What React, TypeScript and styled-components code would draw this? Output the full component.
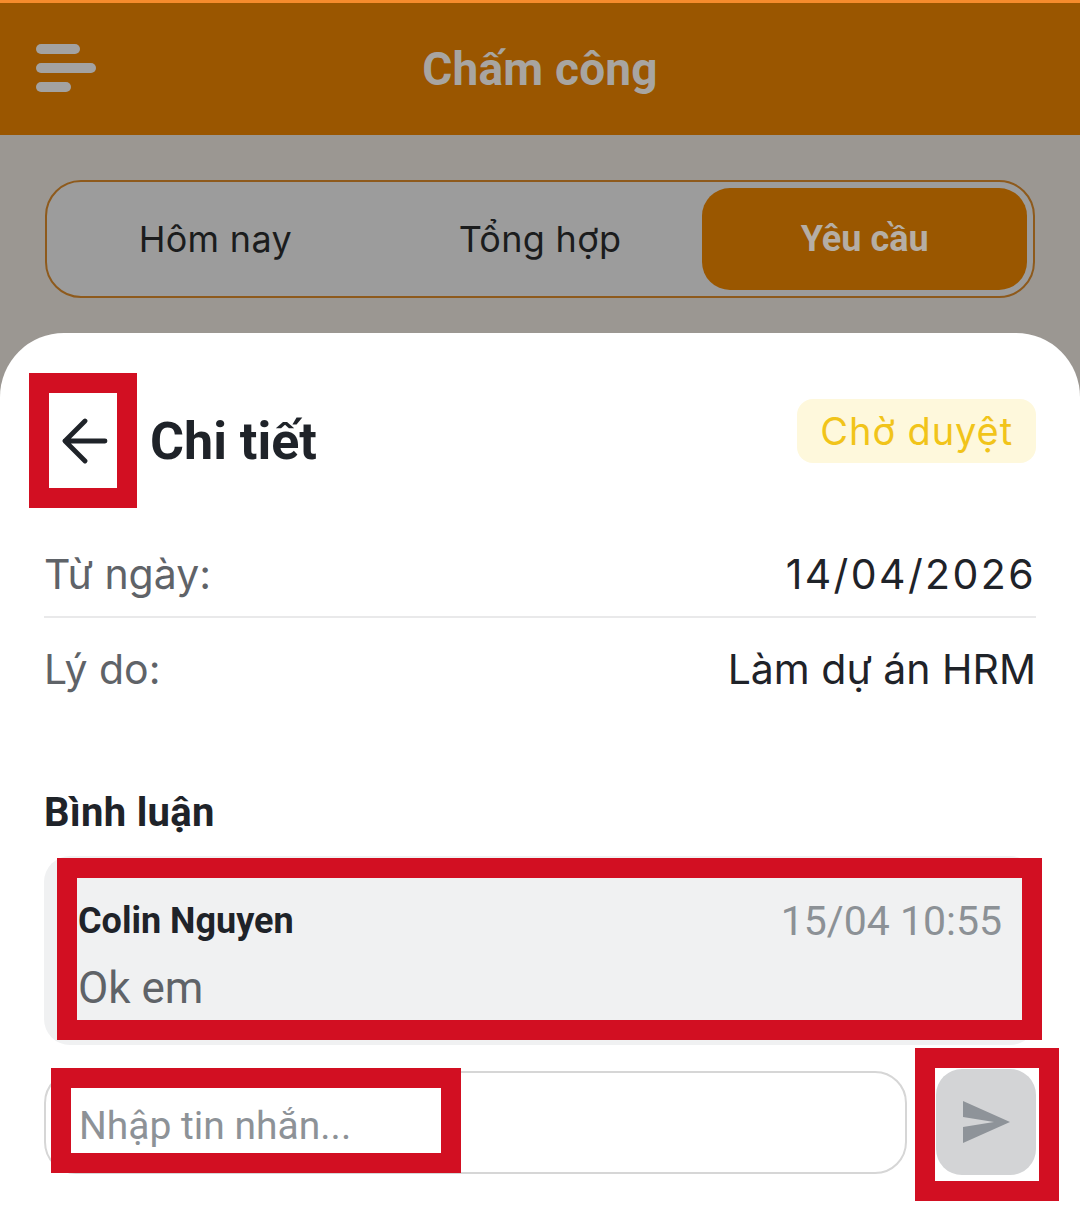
import React from "react";
import styled, { createGlobalStyle } from "styled-components";

const GlobalStyle = createGlobalStyle`
  html, body { margin: 0; padding: 0; }
  body {
    width: 1080px;
    height: 1218px;
    overflow: hidden;
    background: #9b9792;
    font-family: Roboto, "Noto Sans", sans-serif;
  }
  * { box-sizing: border-box; }
`;

const Screen = styled.div`
  display: flex;
  flex-direction: column;
  width: 1080px;
  height: 1218px;
`;

const TopStrip = styled.div`
  height: 3px;
  background: #f68b2c;
`;

const Header = styled.header`
  height: 132px;
  background: #9a5600;
  display: grid;
  grid-template-columns: 1fr auto 1fr;
  align-items: center;
  padding: 0 36px;
`;

const Hamburger = styled.div`
  display: flex;
  flex-direction: column;
  gap: 9px;
  margin-top: -2px;
`;

const Bar = styled.span<{ $w: number }>`
  display: block;
  width: ${(p) => p.$w}px;
  height: 10px;
  border-radius: 5px;
  background: #a3a2a1;
`;

const Title = styled.h1`
  margin: 0;
  font-family: Roboto, sans-serif;
  font-weight: 700;
  font-size: 46px;
  color: #a8a5a1;
  letter-spacing: 0.2px;
`;

const Backdrop = styled.div`
  padding: 45px 45px 35px;
`;

const Tabs = styled.div`
  height: 118px;
  border: 2px solid #8e5a1c;
  border-radius: 36px;
  background: #9c9c9c;
  display: grid;
  grid-template-columns: repeat(3, 1fr);
  padding: 6px;
`;

const Tab = styled.div<{ $active?: boolean }>`
  display: flex;
  align-items: center;
  justify-content: center;
  border-radius: 28px;
  font-family: ${(p) => (p.$active ? "Roboto, sans-serif" : "Inter, sans-serif")};
  font-weight: ${(p) => (p.$active ? 700 : 400)};
  font-size: 36px;
  letter-spacing: ${(p) => (p.$active ? "0" : "0.3px")};
  color: ${(p) => (p.$active ? "#b5aea5" : "#1b1c1d")};
  background: ${(p) => (p.$active ? "#9a5700" : "transparent")};
`;

const Sheet = styled.section`
  flex: 1;
  background: #ffffff;
  border-radius: 64px 64px 0 0;
  padding: 0 44px;
  display: flex;
  flex-direction: column;
`;

const SheetHeader = styled.div`
  margin-top: 60px;
  height: 96px;
  display: flex;
  align-items: center;
`;

const BackButton = styled.button`
  position: relative;
  width: 68px;
  height: 96px;
  margin-left: 4px;
  border: 0;
  padding: 0 0 0 6px;
  background: #fff;
  display: flex;
  align-items: center;
  justify-content: center;
`;

const Annot = styled.div<{ $l: number; $t: number; $w: number; $h: number }>`
  position: absolute;
  left: ${(p) => p.$l}px;
  top: ${(p) => p.$t}px;
  width: ${(p) => p.$w}px;
  height: ${(p) => p.$h}px;
  border: 20px solid #d20f22;
  pointer-events: none;
  z-index: 2;
`;

const SheetTitle = styled.h2`
  margin: 0 0 0 34px;
  font-family: Roboto, sans-serif;
  font-weight: 700;
  font-size: 52px;
  color: #1f2329;
`;

const Badge = styled.div`
  margin-left: auto;
  align-self: flex-start;
  margin-top: 6px;
  height: 64px;
  padding: 0 23px;
  border-radius: 16px;
  background: #fef8dc;
  color: #f1c41a;
  font-family: Inter, sans-serif;
  font-size: 38px;
  letter-spacing: 0.9px;
  display: flex;
  align-items: center;
`;

const InfoList = styled.div`
  margin-top: 34px;
`;

const InfoRow = styled.div<{ $divider?: boolean }>`
  display: flex;
  justify-content: space-between;
  align-items: center;
  padding: 28px 0 19px;
  line-height: 46px;
  border-bottom: ${(p) => (p.$divider ? "2px solid #e9e9ea" : "0")};
  font-family: Inter, sans-serif;
  font-size: 41px;
`;

const Label = styled.span`
  color: #5f6368;
`;

const Value = styled.span<{ $spacing: number }>`
  color: #1f2329;
  letter-spacing: ${(p) => p.$spacing}px;
`;

const SectionTitle = styled.h3`
  margin: 80px 0 0;
  line-height: 44px;
  font-family: Roboto, sans-serif;
  font-weight: 700;
  font-size: 40px;
  letter-spacing: 0.3px;
  color: #1f2329;
`;

const CommentCard = styled.div`
  position: relative;
  margin-top: 21px;
  height: 189px;
  border-radius: 26px;
  background: #f0f1f2;
  padding: 44px 34px 0 34px;
`;

const CommentHead = styled.div`
  display: flex;
  justify-content: space-between;
  align-items: center;
  line-height: 42px;
`;

const Author = styled.span`
  font-weight: 700;
  font-size: 36px;
  color: #1f2329;
`;

const Time = styled.span`
  font-size: 41px;
  color: #8c9196;
`;

const CommentText = styled.div`
  margin-top: 22px;
  line-height: 48px;
  font-size: 44px;
  color: #5f6368;
`;

const Composer = styled.div`
  margin-top: 24px;
  display: flex;
  align-items: center;
  gap: 29px;
`;

const InputWrap = styled.div`
  position: relative;
  flex: 1;
  height: 103px;
`;

const Input = styled.input`
  width: 100%;
  height: 100%;
  border: 2px solid #d6d6d6;
  border-radius: 32px;
  padding: 8px 0 0 33px;
  font-family: Roboto, sans-serif;
  font-size: 39px;
  color: #1f2329;
  background: #fff;
  outline: none;
  &::placeholder {
    color: #8d9297;
  }
`;

const SendButton = styled.button`
  position: relative;
  width: 100px;
  height: 106px;
  border: 0;
  border-radius: 26px;
  background: #d3d4d6;
  display: flex;
  align-items: center;
  justify-content: center;
  padding: 0;
`;

export default function App() {
  return (
    <>
      <GlobalStyle />
      <Screen>
        <TopStrip />
        <Header>
          <Hamburger>
            <Bar $w={44} />
            <Bar $w={60} />
            <Bar $w={35} />
          </Hamburger>
          <Title>Chấm công</Title>
          <div />
        </Header>
        <Backdrop>
          <Tabs>
            <Tab>Hôm nay</Tab>
            <Tab>Tổng hợp</Tab>
            <Tab $active>Yêu cầu</Tab>
          </Tabs>
        </Backdrop>
        <Sheet>
          <SheetHeader>
            <BackButton aria-label="Quay lại">
              <svg width="46" height="46" viewBox="0 0 46 46" fill="none">
                <path
                  d="M23 3 L3 23 L23 43 M3 23 H43"
                  stroke="#1f2329"
                  strokeWidth="4.8"
                  strokeLinecap="round"
                  strokeLinejoin="round"
                />
              </svg>
              <Annot $l={-19} $t={-20} $w={108} $h={135} />
            </BackButton>
            <SheetTitle>Chi tiết</SheetTitle>
            <Badge>Chờ duyệt</Badge>
          </SheetHeader>
          <InfoList>
            <InfoRow $divider>
              <Label>Từ ngày:</Label>
              <Value $spacing={2.4}>14/04/2026</Value>
            </InfoRow>
            <InfoRow>
              <Label>Lý do:</Label>
              <Value $spacing={0}>Làm dự án HRM</Value>
            </InfoRow>
          </InfoList>
          <SectionTitle>Bình luận</SectionTitle>
          <CommentCard>
            <CommentHead>
              <Author>Colin Nguyen</Author>
              <Time>15/04 10:55</Time>
            </CommentHead>
            <CommentText>Ok em</CommentText>
            <Annot $l={13} $t={2} $w={985} $h={182} />
          </CommentCard>
          <Composer>
            <InputWrap>
              <Input placeholder="Nhập tin nhắn..." />
              <Annot $l={7} $t={-3} $w={410} $h={105} />
            </InputWrap>
            <SendButton aria-label="Gửi">
              <svg width="48" height="42" viewBox="0 0 48 42">
                <path d="M1 0 L48 21 L1 42 L1 26 L32 21 L1 16 Z" fill="#8e9399" />
              </svg>
              <Annot $l={-21} $t={-21} $w={144} $h={153} />
            </SendButton>
          </Composer>
        </Sheet>
      </Screen>
    </>
  );
}
